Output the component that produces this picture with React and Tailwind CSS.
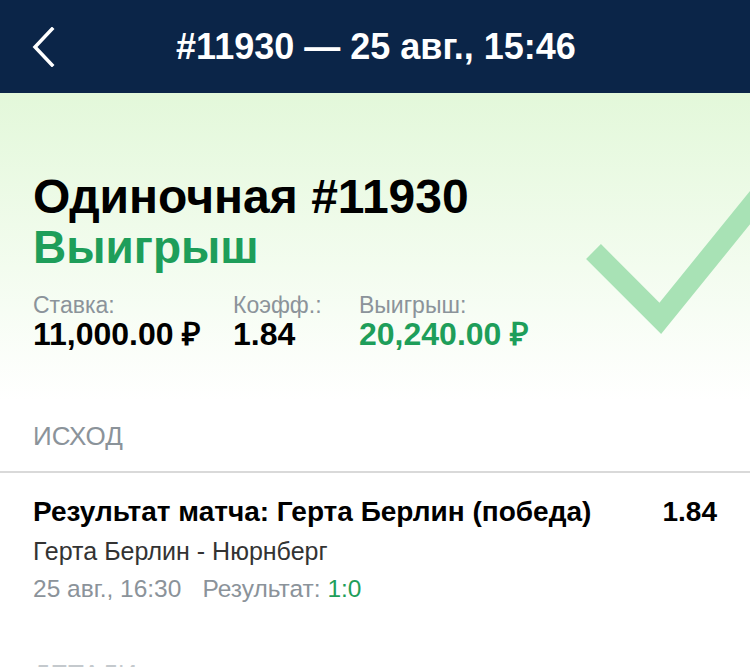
export default function App() {
  const font = { fontFamily: '"Liberation Sans", Arial, sans-serif' };
  return (
    <div className="w-[750px] h-[667px] overflow-hidden bg-white" style={font}>
      <header className="h-[93px] bg-[#0b2548] flex items-center relative">
        <svg className="absolute left-[30px] top-[27px]" width="26" height="40" viewBox="0 0 26 40">
          <polyline points="22,2 5,20 22,38" fill="none" stroke="#ffffff" strokeWidth="3.5" strokeLinecap="square" />
        </svg>
        <div className="w-full text-center text-white font-bold text-[36px] leading-[40px] pl-[2px]">
          #11930 — 25 авг., 15:46
        </div>
      </header>

      <section className="relative bg-gradient-to-b from-[#e3f8da] to-white pt-[78px] pb-[50px] px-[33px] overflow-hidden">
        <svg className="absolute left-[560px] top-[57px]" width="190" height="220" viewBox="560 150 190 220">
          <polyline points="593.5,251.5 660.3,318.3 800,146" fill="none" stroke="#a8e2b5" strokeWidth="21" strokeLinejoin="miter" strokeMiterlimit="10" />
        </svg>
        <div className="relative">
          <div className="text-[48px] leading-[51px] font-bold text-black">Одиночная #11930</div>
          <div className="text-[46px] leading-[51px] font-bold text-[#1e9e5a]">Выигрыш</div>
          <div className="flex mt-[19px]">
            <div className="w-[200px]">
              <div className="text-[23px] leading-[26px] text-[#8b939a]">Ставка:</div>
              <div className="text-[32px] leading-[33px] font-bold text-black">11,000.00 ₽</div>
            </div>
            <div className="w-[126px]">
              <div className="text-[23px] leading-[26px] text-[#8b939a]">Коэфф.:</div>
              <div className="text-[32px] leading-[33px] font-bold text-black">1.84</div>
            </div>
            <div>
              <div className="text-[23px] leading-[26px] text-[#8b939a]">Выигрыш:</div>
              <div className="text-[32px] leading-[33px] font-bold text-[#1e9e5a]">20,240.00 ₽</div>
            </div>
          </div>
        </div>
      </section>

      <div className="px-[33px] pt-[20px] pb-[20px]">
        <div className="text-[26px] leading-[30px] text-[#8b939a] uppercase">Исход</div>
      </div>
      <div className="h-[2px] bg-[#d9d9d9]" />

      <div className="px-[33px] pt-[23px] pb-[50px]">
        <div className="flex justify-between">
          <div className="text-[28px] leading-[32px] font-bold text-black">Результат матча: Герта Берлин (победа)</div>
          <div className="text-[28px] leading-[32px] font-bold text-black">1.84</div>
        </div>
        <div className="mt-[9px] text-[25px] leading-[28px] text-[#333333]">Герта Берлин - Нюрнберг</div>
        <div className="mt-[10px] text-[24.5px] leading-[28px] text-[#8b939a]">
          25 авг., 16:30<span className="ml-[21px]">Результат: </span>
          <span className="text-[#1e9e5a]">1:0</span>
        </div>
      </div>

      <div className="px-[33px] pt-[6px]">
        <div className="text-[26px] leading-[30px] text-[#c4c9cd] uppercase">Детали</div>
      </div>
    </div>
  );
}
